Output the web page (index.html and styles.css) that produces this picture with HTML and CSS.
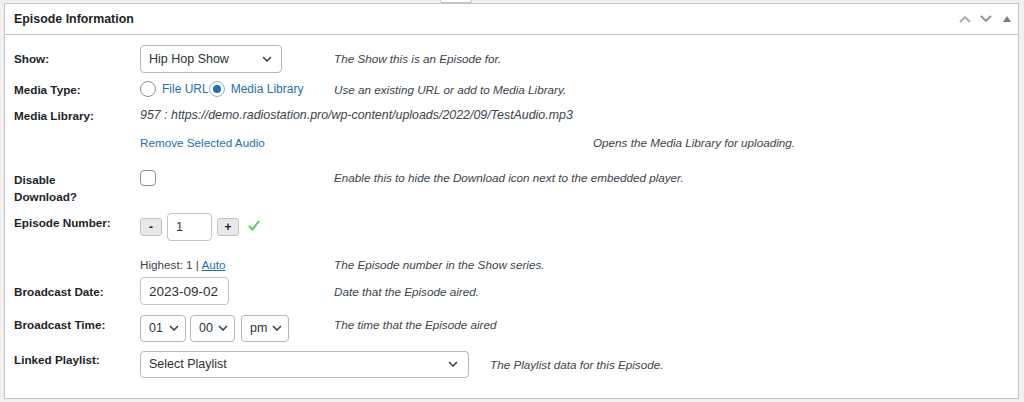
FILE: index.html
```html
<!DOCTYPE html>
<html lang="en">
<head>
    <meta charset="UTF-8">
    <meta name="viewport" content="width=device-width, initial-scale=1.0">
    <title>Episode Information</title>
    <link rel="stylesheet" href="styles.css">
</head>
<body>
    <div class="page">
        <div class="tab-edge"></div>

        <div class="postbox">
            <div class="postbox-header">
                <h2>Episode Information</h2>
                <div class="handle-actions">
                    <span class="handle up">
                        <svg width="12" height="8" viewBox="0 0 12 8"><polyline points="1,7 6,2 11,7" fill="none" stroke="#a7aaad" stroke-width="1.8"/></svg>
                    </span>
                    <span class="handle down">
                        <svg width="12" height="8" viewBox="0 0 12 8"><polyline points="1,1 6,6 11,1" fill="none" stroke="#8c8f94" stroke-width="1.8"/></svg>
                    </span>
                    <span class="handle toggle">
                        <svg width="8" height="6" viewBox="0 0 8 6"><polygon points="0,6 4,0 8,6" fill="#787c82"/></svg>
                    </span>
                </div>
            </div>

            <div class="inside">
                <div class="field-row row-show">
                    <div class="field-label">Show:</div>
                    <div class="field-control">
                        <div class="select select-show">
                            <span>Hip Hop Show</span>
                            <svg width="10" height="6" viewBox="0 0 10 6"><polyline points="1,1 5,5 9,1" fill="none" stroke="#3c434a" stroke-width="1.6"/></svg>
                        </div>
                    </div>
                    <div class="field-desc">The Show this is an Episode for.</div>
                </div>

                <div class="field-row row-type">
                    <div class="field-label">Media Type:</div>
                    <div class="field-control">
                        <span class="radio"></span><span class="radio-text">File URL</span>
                        <span class="radio checked"></span><span class="radio-text">Media Library</span>
                    </div>
                    <div class="field-desc">Use an existing URL or add to Media Library.</div>
                </div>

                <div class="field-row row-library">
                    <div class="field-label">Media Library:</div>
                    <div class="media-file">957 : https://demo.radiostation.pro/wp-content/uploads/2022/09/TestAudio.mp3</div>
                </div>

                <div class="field-row row-remove">
                    <div class="field-label"></div>
                    <div class="field-control wide">
                        <a class="plain-link" href="#">Remove Selected Audio</a>
                    </div>
                    <div class="field-desc">Opens the Media Library for uploading.</div>
                </div>

                <div class="field-row row-download">
                    <div class="field-label">Disable Download?</div>
                    <div class="field-control">
                        <span class="checkbox"></span>
                    </div>
                    <div class="field-desc">Enable this to hide the Download icon next to the embedded player.</div>
                </div>

                <div class="field-row row-number">
                    <div class="field-label raised">Episode Number:</div>
                    <div class="field-control">
                        <span class="step-btn">-</span>
                        <span class="text-input number-input">1</span>
                        <span class="step-btn">+</span>
                        <svg class="valid-mark" width="12" height="11" viewBox="0 0 12 11"><polyline points="1,6 4.5,9.5 11,1" fill="none" stroke="#5ec95a" stroke-width="2"/></svg>
                    </div>
                </div>

                <div class="field-row row-highest">
                    <div class="field-label"></div>
                    <div class="field-control">
                        <span class="highest">Highest: 1 | <a href="#">Auto</a></span>
                    </div>
                    <div class="field-desc">The Episode number in the Show series.</div>
                </div>

                <div class="field-row row-date">
                    <div class="field-label">Broadcast Date:</div>
                    <div class="field-control">
                        <span class="text-input date-input">2023-09-02</span>
                    </div>
                    <div class="field-desc">Date that the Episode aired.</div>
                </div>

                <div class="field-row row-time">
                    <div class="field-label raised">Broadcast Time:</div>
                    <div class="field-control">
                        <div class="select select-hour">
                            <span>01</span>
                            <svg width="10" height="6" viewBox="0 0 10 6"><polyline points="1,1 5,5 9,1" fill="none" stroke="#3c434a" stroke-width="1.6"/></svg>
                        </div>
                        <div class="select select-min">
                            <span>00</span>
                            <svg width="10" height="6" viewBox="0 0 10 6"><polyline points="1,1 5,5 9,1" fill="none" stroke="#3c434a" stroke-width="1.6"/></svg>
                        </div>
                        <div class="select select-meridiem">
                            <span>pm</span>
                            <svg width="10" height="6" viewBox="0 0 10 6"><polyline points="1,1 5,5 9,1" fill="none" stroke="#3c434a" stroke-width="1.6"/></svg>
                        </div>
                    </div>
                    <div class="field-desc raised">The time that the Episode aired</div>
                </div>

                <div class="field-row row-playlist">
                    <div class="field-label raised-more">Linked Playlist:</div>
                    <div class="field-control mid">
                        <div class="select select-playlist">
                            <span>Select Playlist</span>
                            <svg width="10" height="6" viewBox="0 0 10 6"><polyline points="1,1 5,5 9,1" fill="none" stroke="#3c434a" stroke-width="1.6"/></svg>
                        </div>
                    </div>
                    <div class="field-desc">The Playlist data for this Episode.</div>
                </div>
            </div>
        </div>
    </div>
</body>
</html>
```

FILE: styles.css
```css
body {
    margin: 0;
    background: #f0f0f1;
    font-family: "Liberation Sans", Arial, sans-serif;
    font-size: 11.7px;
    color: #2c3338;
}
.page {
    padding: 0 5px 0 4px;
}
.tab-edge {
    width: 30px;
    height: 2px;
    margin-left: 436px;
    border: 1px solid #c3c4c7;
    border-top: none;
    border-radius: 0 0 3px 3px;
    background: #fff;
}
.postbox {
    background: #fff;
    border: 1px solid #c3c4c7;
}
.postbox-header {
    height: 30px;
    display: flex;
    align-items: center;
    justify-content: space-between;
    padding-left: 9px;
    border-bottom: 1px solid #c3c4c7;
}
.postbox-header h2 {
    margin: 0;
    font-size: 12.4px;
    font-weight: bold;
    color: #1d2327;
}
.handle-actions {
    display: flex;
    padding-right: 1px;
}
.handle {
    width: 21px;
    height: 30px;
    display: flex;
    align-items: center;
    justify-content: center;
}
.inside {
    padding: 8px 0 20px 9px;
}
.field-row {
    display: flex;
    align-items: center;
}
.field-label {
    width: 100px;
    padding-right: 26px;
    flex-shrink: 0;
    font-weight: bold;
    color: #1d2327;
    line-height: 17px;
}
.field-label.raised, .field-desc.raised {
    margin-top: -8px;
}
.field-label.raised-more {
    margin-top: -10px;
}
.field-control {
    width: 194px;
    flex-shrink: 0;
    display: flex;
    align-items: center;
}
.field-control.wide {
    width: 453px;
}
.field-control.mid {
    width: 350px;
}
.field-desc {
    font-style: italic;
    color: #3c434a;
}

.row-show { height: 31px; }
.row-type { height: 30px; }
.row-library { height: 22px; }
.row-remove { height: 32px; }
.row-download {
    height: 54px;
    box-sizing: border-box;
    padding-top: 13px;
    align-items: flex-start;
}
.row-number { height: 29px; }
.row-highest {
    height: 35px;
    box-sizing: border-box;
    padding-top: 11px;
}
.row-date { height: 30px; }
.row-time { height: 44px; }
.row-playlist { height: 28px; }

.select {
    box-sizing: border-box;
    height: 27px;
    display: flex;
    align-items: center;
    justify-content: space-between;
    padding: 0 8px 0 8px;
    border: 1px solid #b4b7ba;
    border-radius: 4px;
    background: #fff;
    font-size: 12.5px;
    color: #2c3338;
}
.select-show {
    width: 142px;
    height: 28px;
    padding-right: 9px;
}
.select-hour {
    width: 46px;
    margin-right: 4px;
    padding-right: 6px;
}
.select-min {
    width: 45px;
    margin-right: 6px;
    padding-right: 6px;
}
.select-meridiem {
    width: 48px;
    padding-right: 6px;
}
.select-playlist {
    width: 329px;
    padding-right: 10px;
}

.radio {
    box-sizing: border-box;
    width: 16px;
    height: 16px;
    border: 1px solid #8c8f94;
    border-radius: 50%;
    display: flex;
    align-items: center;
    justify-content: center;
    margin-right: 6px;
}
.radio.checked {
    border-color: #8fb4d9;
}
.radio.checked::after {
    content: "";
    width: 8px;
    height: 8px;
    border-radius: 50%;
    background: #2271b1;
}
.radio-text {
    color: #2271b1;
    font-size: 12px;
}
.radio-text:first-of-type {
    margin-right: 2px;
}

.media-file {
    font-style: italic;
    font-size: 12.4px;
    color: #3c434a;
}
.plain-link {
    color: #2271b1;
    text-decoration: none;
}

.checkbox {
    box-sizing: border-box;
    width: 16px;
    height: 16px;
    margin-top: -1px;
    border: 1px solid #8c8f94;
    border-radius: 4px;
    background: #fff;
}

.step-btn {
    box-sizing: border-box;
    width: 22px;
    height: 18px;
    display: flex;
    align-items: center;
    justify-content: center;
    background: #e9e9ea;
    border: 1px solid #c3c4c7;
    border-radius: 3px;
    font-weight: bold;
    font-size: 12px;
    color: #1d2327;
}
.text-input {
    box-sizing: border-box;
    height: 28px;
    display: flex;
    align-items: center;
    padding-left: 8px;
    border: 1px solid #c3c4c7;
    border-radius: 4px;
    background: #fff;
    font-size: 12.5px;
    color: #2c3338;
}
.number-input {
    width: 45px;
    margin: 0 5px;
}
.date-input {
    width: 89px;
    font-size: 13.5px;
}
.valid-mark {
    margin-left: 9px;
    margin-top: -3px;
}
.highest {
    color: #3c434a;
}
.highest a {
    color: #2271b1;
}
```
